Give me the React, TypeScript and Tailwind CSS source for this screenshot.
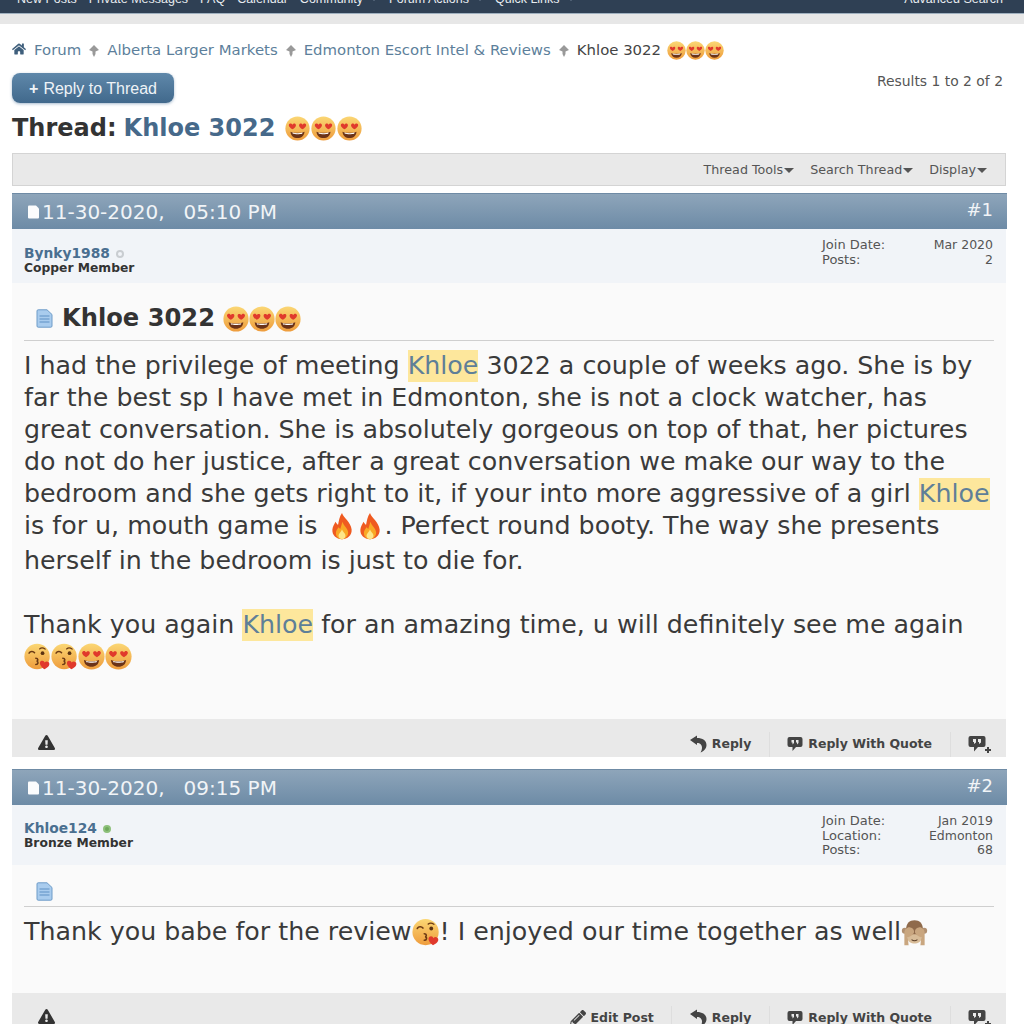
import React from 'react';
import { FaHome, FaExclamationTriangle, FaPencilAlt } from 'react-icons/fa';

const FaceGrad = () => (
  <defs>
    <linearGradient id="face" x1="0" y1="0" x2="0" y2="1">
      <stop offset="0" stopColor="#fbd774" />
      <stop offset="1" stopColor="#ee9c3c" />
    </linearGradient>
  </defs>
);

const HeartEyes = ({ size = 25 }: { size?: number }) => (
  <svg width={size} height={size} viewBox="0 0 32 32" className="inline-block shrink-0">
    <FaceGrad />
    <circle cx="16" cy="16" r="15.5" fill="url(#face)" />
    <path d="M7 20 C11 22 21 22 25 20 C24.5 25.5 21 28 16 28 C11 28 7.5 25.5 7 20Z" fill="#6b3318" />
    <path d="M9.5 21.2 C13 22.2 19 22.2 22.5 21.2 L22 22.8 C19 23.5 13 23.5 10 22.8Z" fill="#fff" />
    <path d="M9.5 17 C4.5 14 4 10.8 6 9.8 C7.7 9 9 10 9.5 11.2 C10.3 9.8 12 9.2 13.3 10.2 C15 11.8 13.6 15 9.5 17Z" fill="#e0392c" />
    <path d="M22.5 17 C27.5 14 28 10.8 26 9.8 C24.3 9 23 10 22.5 11.2 C21.7 9.8 20 9.2 18.7 10.2 C17 11.8 18.4 15 22.5 17Z" fill="#e0392c" />
  </svg>
);

const KissFace = ({ size = 25 }: { size?: number }) => (
  <svg width={size} height={size} viewBox="0 0 32 32" className="inline-block shrink-0">
    <FaceGrad />
    <circle cx="15.5" cy="16" r="15" fill="url(#face)" />
    <path d="M6 12 C7.5 9.5 11 9.5 12.5 11.5" fill="none" stroke="#6b3a14" strokeWidth="1.8" strokeLinecap="round" />
    <circle cx="22" cy="12" r="2.2" fill="#5b3312" />
    <path d="M18.5 7 C20 5.8 23 5.8 25 7.2" fill="none" stroke="#6b3a14" strokeWidth="1.5" strokeLinecap="round" />
    <path d="M14 18 C17 18 17 21 15 21.5 C17.5 22 17 25.5 14 25.5" fill="none" stroke="#6b3a14" strokeWidth="1.8" strokeLinecap="round" />
    <path d="M24 31 C17.5 26.5 18 21.5 21 21 C23 20.6 24 22 24.5 23 C25.5 21.7 27.5 21.4 29 22.6 C31.5 25 29.5 29 24 31Z" fill="#e0392c" />
  </svg>
);

const Fire = ({ size = 25 }: { size?: number }) => (
  <svg width={size} height={size} viewBox="0 0 32 32" className="inline-block shrink-0">
    <path d="M16 1 C18 7 26 11 27 20 C27.5 27 22 31 16 31 C9.5 31 4.5 26.5 5 20 C5.3 16 7.5 13.5 8.5 11 C10 13 10.5 14 11.5 14.5 C12.5 10 13 5 16 1Z" fill="#ef5a20" />
    <path d="M16.5 11 C18 16 23 18.5 23 23.5 C23 28 19.5 31 16 31 C12 31 9 28 9 24 C9 21 11 19.5 12 17.5 C13 18.5 13.5 19 14 19.5 C14.8 17 15.5 14 16.5 11Z" fill="#f9a825" />
    <path d="M16 20 C17 23 20 24.5 20 27 C20 29.5 18 31 16 31 C13.8 31 12 29.5 12 27.2 C12 24.5 15 23 16 20Z" fill="#fde68a" />
  </svg>
);

const Monkey = ({ size = 27 }: { size?: number }) => (
  <svg width={size} height={size} viewBox="0 0 32 32" className="inline-block shrink-0">
    <circle cx="4.5" cy="14" r="3.5" fill="#b08f70" />
    <circle cx="27.5" cy="14" r="3.5" fill="#b08f70" />
    <path d="M6 13 C6 5 10 1.5 16 1.5 C22 1.5 26 5 26 13 L26 20 L6 20Z" fill="#8f6a4b" />
    <path d="M8 23 C8 19 12 18 16 18 C20 18 24 19 24 23 C24 27 20 29 16 29 C12 29 8 27 8 23Z" fill="#d8bc98" />
    <path d="M12.5 24.5 C14.5 26 17.5 26 19.5 24.5" fill="none" stroke="#5b3f29" strokeWidth="1.2" />
    <path d="M4 16 C4 12 8 9 11 10 C14 10.5 15.5 12.5 15.5 15 C15.5 18 11 21 8 21.5 L9 31 L4 31Z" fill="#c9a67f" />
    <path d="M28 16 C28 12 24 9 21 10 C18 10.5 16.5 12.5 16.5 15 C16.5 18 21 21 24 21.5 L23 31 L28 31Z" fill="#c9a67f" />
  </svg>
);

const Sep = () => (
  <svg width="10" height="12" viewBox="0 0 10 12" className="mx-[8px] shrink-0">
    <path d="M5 0 L10 5 L6.5 6.5 L6.5 9 L5 12 L3.5 9 L3.5 6.5 L0 5Z" fill="#999" />
  </svg>
);

const NavCaret = () => <span className="ml-[8px] inline-block border-x-[3px] border-t-[3px] border-x-transparent border-t-[#6d7d8f] align-middle" />;

const Caret = () => <span className="ml-px inline-block border-x-[5px] border-t-[5px] border-x-transparent border-t-[#555] align-middle" />;

const DocWhite = () => (
  <svg width="13" height="14" viewBox="0 0 13 14" className="ml-px mr-[2px] shrink-0">
    <path d="M1 1.5 Q1 .5 2 .5 L9 .5 L12 3.5 L12 12.5 Q12 13.5 11 13.5 L2 13.5 Q1 13.5 1 12.5Z" fill="#fbfcfd" />
  </svg>
);

const DocBlue = () => (
  <svg width="17" height="19" viewBox="0 0 17 19" className="shrink-0">
    <path d="M1 2 Q1 .8 2.2 .8 L11 .8 L16 5.5 L16 17 Q16 18.2 14.8 18.2 L2.2 18.2 Q1 18.2 1 17Z" fill="#a9ccee" stroke="#6e9cc8" />
    <path d="M3.5 7 H13.5 M3.5 10 H13.5 M3.5 13 H13.5" stroke="#5f90c4" strokeWidth="1.2" />
  </svg>
);

const ReplyIcon = () => (
  <svg width="17" height="18" viewBox="0 0 17 18" className="shrink-0">
    <path d="M0 5 L7 .5 L7 3 C12.5 3 16.5 5.5 16.5 10 C16.5 13.5 14 16 10.5 17.5 C12 15 12.5 12.5 11.5 10.5 C10.5 8.5 9 8 7 8 L7 10Z" fill="#444" />
  </svg>
);

const QuoteBubble = () => (
  <svg width="16" height="16" viewBox="0 0 16 16" className="shrink-0">
    <path d="M2.5 1 H13.5 Q15.5 1 15.5 3 V9 Q15.5 11 13.5 11 H9 L5.5 15 V11 H2.5 Q.5 11 .5 9 V3 Q.5 1 2.5 1Z" fill="#444" />
    <path d="M4.5 4 H7 V7 L5.5 8.5 V6.5 H4.5Z M9 4 H11.5 V7 L10 8.5 V6.5 H9Z" fill="#e9e9e9" />
  </svg>
);

const QuotePlus = () => (
  <svg width="24" height="18" viewBox="0 0 24 18" className="shrink-0">
    <path d="M2.5 1 H15.5 Q17.5 1 17.5 3 V10 Q17.5 12 15.5 12 H10 L6 16.5 V12 H2.5 Q.5 12 .5 10 V3 Q.5 1 2.5 1Z" fill="#444" />
    <path d="M5 4 H8 V7.5 L6 9 V7 H5Z M10 4 H13 V7.5 L11 9 V7 H10Z" fill="#e9e9e9" />
    <path d="M17 15 H23 M20 12 V18" stroke="#444" strokeWidth="2" />
  </svg>
);

const Action = ({ icon, label }: { icon: React.ReactNode; label: string }) => (
  <span className="flex items-center gap-[5px] text-[12.5px] font-bold text-[#444]">
    {icon}
    {label}
  </span>
);

const Divider = () => <span className="mx-[17.5px] h-[25px] w-px bg-[#dedede]" />;

const Hl = ({ children }: { children: React.ReactNode }) => (
  <span className="inline-block h-[32px] bg-[#fde79c] leading-[32px] text-[#5f7f98]">{children}</span>
);

const PostHead = ({ date, time, num }: { date: string; time: string; num: string }) => (
  <div className="mr-[-1px] flex h-[36px] items-center justify-between border-t border-[#6f8ba5] bg-gradient-to-b from-[#8ea5ba] to-[#6d8ba6] pl-[14px] pr-[14px] text-[#f1f4f7]">
    <div className="flex items-center text-[20px]">
      <DocWhite />
      <span>{date},</span>
      <span className="ml-[19px]">{time}</span>
    </div>
    <span className="mt-[-5px] text-[18px]">{num}</span>
  </div>
);

const UserInfo = ({ name, rank, online, rows, h, pad }: { name: string; rank: string; online: boolean; rows: [string, string][]; h: string; pad: string }) => (
  <div className={`flex justify-between bg-[#f1f4f8] pl-[12px] pr-[13px] ${h}`}>
    <div className={`font-bold leading-[15px] ${pad}`}>
      <div className="flex items-center gap-[6px] text-[13.8px] text-[#4a6f90]">
        {name}
        <span className={`h-[8px] w-[8px] rounded-full border-2 ${online ? 'border-[#8dc07a] bg-[#6fa85c]' : 'border-[#c9cdd1] bg-[#f1f4f8]'}`} />
      </div>
      <div className="text-[12.3px] text-[#333]">{rank}</div>
    </div>
    <div className="w-[171px] pt-[9px] text-[13px] leading-[14.6px] text-[#555]">
      {rows.map(([k, v]) => (
        <div key={k} className="flex justify-between">
          <span>{k}</span>
          <span className="text-[12.5px]">{v}</span>
        </div>
      ))}
    </div>
  </div>
);

export default function App() {
  return (
    <div className="h-[1024px] w-[1024px] overflow-hidden bg-white font-['DejaVu_Sans',sans-serif] text-[#333]">
      <div className="flex h-[14px] items-end justify-between overflow-hidden border-b border-[#9fb0bf] bg-[#2f4054] pb-[7px] pl-[17px] pr-[21px] font-['Liberation_Sans',sans-serif] text-[12.5px] leading-[14px] text-[#e8ecf0]">
        <div className="flex gap-[12px]">
          <span>New Posts</span>
          <span>Private Messages</span>
          <span>FAQ</span>
          <span>Calendar</span>
          <span>Community<NavCaret /></span>
          <span>Forum Actions<NavCaret /></span>
          <span>Quick Links<NavCaret /></span>
        </div>
        <span>Advanced Search</span>
      </div>
      <div className="h-[10px] bg-[#e7e7e7]" />

      <div className="mt-[14px] flex h-[23px] items-center pl-[12px] pt-[2px] text-[14.9px] text-[#5d7f9b]">
        <FaHome size={14} className="mr-[8px] mt-[-3px] text-[#3f5f7c]" />
        <span>Forum</span>
        <Sep />
        <span>Alberta Larger Markets</span>
        <Sep />
        <span>Edmonton Escort Intel &amp; Reviews</span>
        <Sep />
        <span className="text-[#444]">Khloe 3022</span>
        <span className="ml-[6px] flex">
          <HeartEyes size={19} />
          <HeartEyes size={19} />
          <HeartEyes size={19} />
        </span>
      </div>

      <div className="mt-[12px] flex justify-between pl-[12px] pr-[21px]">
        <div className="flex h-[30px] w-[162px] items-center justify-center rounded-[8px] bg-gradient-to-b from-[#5f88aa] to-[#41698c] pt-px font-['Liberation_Sans',sans-serif] text-[16px] text-[#eef3f7] shadow-[0_1px_3px_rgba(80,120,160,0.5)]">
          <span className="mr-[5px] font-bold">+</span> Reply to Thread
        </div>
        <span className="text-[13.9px] leading-[17px] text-[#555]">Results 1 to 2 of 2</span>
      </div>

      <div className="ml-[12px] mt-[9px] flex h-[32px] items-center text-[24px] font-bold">
        <span className="mr-[7px]">Thread:</span>
        <span className="text-[#46698a]">Khloe 3022</span>
        <span className="ml-[10px] flex gap-px">
          <HeartEyes size={25} />
          <HeartEyes size={25} />
          <HeartEyes size={25} />
        </span>
      </div>

      <div className="mx-[12px] mr-[18px]">
        <div className="mt-[9px] flex h-[33px] items-center justify-end gap-[16px] border border-[#d4d4d4] bg-[#e9e9e9] pr-[18px] text-[12.7px] text-[#555]">
          <span>Thread Tools<Caret /></span>
          <span>Search Thread<Caret /></span>
          <span>Display<Caret /></span>
        </div>

        <div className="mt-[7px]">
          <PostHead date="11-30-2020" time="05:10 PM" num="#1" />
          <UserInfo name="Bynky1988" rank="Copper Member" online={false} rows={[['Join Date:', 'Mar 2020'], ['Posts:', '2']]} h="h-[54px]" pad="pt-[17px]" />
          <div className="h-[436px] bg-[#fafafa] px-[12px]">
            <div className="flex h-[58px] items-center border-b border-[#cfcfcf] pl-[12px] pt-[14px]">
              <DocBlue />
              <span className="ml-[9px] text-[24.2px] font-bold">Khloe 3022</span>
              <span className="ml-[8px] flex">
                <HeartEyes size={26} />
                <HeartEyes size={26} />
                <HeartEyes size={26} />
              </span>
            </div>
            <div className="mt-[9px] whitespace-nowrap text-[25.3px] leading-[32px] text-[#3a3a3a]">
              <div>I had the privilege of meeting <Hl>Khloe</Hl> 3022 a couple of weeks ago. She is by</div>
              <div>far the best sp I have met in Edmonton, she is not a clock watcher, has</div>
              <div>great conversation. She is absolutely gorgeous on top of that, her pictures</div>
              <div>do not do her justice, after a great conversation we make our way to the</div>
              <div>bedroom and she gets right to it, if your into more aggressive of a girl <Hl>Khloe</Hl></div>
              <div className="mb-[3px] flex h-[32px] items-center">
                is for u, mouth game is&nbsp;
                <span className="ml-[3px] flex">
                  <Fire size={28} />
                  <Fire size={28} />
                </span>
                . Perfect round booty. The way she presents
              </div>
              <div>herself in the bedroom is just to die for.</div>
              <div className="mt-[32px]">Thank you again <Hl>Khloe</Hl> for an amazing time, u will definitely see me again</div>
              <div className="flex h-[30px] items-center">
                <KissFace size={27} />
                <KissFace size={27} />
                <HeartEyes size={27} />
                <HeartEyes size={27} />
              </div>
            </div>
          </div>
          <div className="flex h-[38px] items-center justify-between bg-[#e9e9e9] pl-[26px] pr-[14px] pt-[8px]">
            <FaExclamationTriangle size={17} className="text-[#333]" />
            <div className="flex items-center pt-[4px]">
              <Action icon={<ReplyIcon />} label="Reply" />
              <Divider />
              <Action icon={<QuoteBubble />} label="Reply With Quote" />
              <Divider />
              <QuotePlus />
            </div>
          </div>
        </div>

        <div className="mt-[12px]">
          <PostHead date="11-30-2020" time="09:15 PM" num="#2" />
          <UserInfo name="Khloe124" rank="Bronze Member" online rows={[['Join Date:', 'Jan 2019'], ['Location:', 'Edmonton'], ['Posts:', '68']]} h="h-[60px]" pad="pt-[16px]" />
          <div className="h-[128px] bg-[#fafafa] px-[12px]">
            <div className="flex h-[42px] items-center border-b border-[#cfcfcf] pl-[12px] pt-[12px]">
              <DocBlue />
            </div>
            <div className="mt-[9px] flex h-[32px] items-center whitespace-nowrap text-[25.3px] leading-[32px] text-[#3a3a3a]">
              Thank you babe for the review<KissFace size={28} />! I enjoyed our time together as well<Monkey size={27} />
            </div>
          </div>
          <div className="flex h-[38px] items-center justify-between bg-[#e9e9e9] pl-[26px] pr-[14px] pt-[8px]">
            <FaExclamationTriangle size={17} className="text-[#333]" />
            <div className="flex items-center pt-[4px]">
              <Action icon={<FaPencilAlt size={16} />} label="Edit Post" />
              <Divider />
              <Action icon={<ReplyIcon />} label="Reply" />
              <Divider />
              <Action icon={<QuoteBubble />} label="Reply With Quote" />
              <Divider />
              <QuotePlus />
            </div>
          </div>
        </div>
      </div>
    </div>
  );
}
